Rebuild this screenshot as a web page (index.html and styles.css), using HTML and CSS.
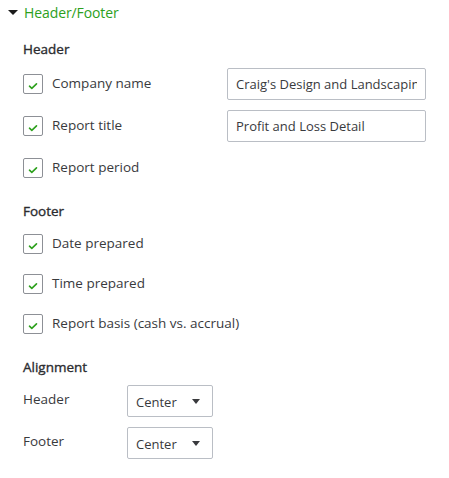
FILE: index.html
```html
<!DOCTYPE html>
<html lang="en">
<head>
    <meta charset="UTF-8">
    <title>Header/Footer</title>
    <link rel="stylesheet" href="styles.css">
</head>
<body>
    <div class="section-toggle">
        <span class="caret"></span>
        <span class="section-title">Header/Footer</span>
    </div>

    <div class="panel">
        <h3 class="group-title">Header</h3>
        <div class="rows rows-header">
            <label class="row">
                <span class="check"><svg viewBox="0 0 10 8" width="10" height="8"><polyline points="1.5,4.2 3.8,6.3 8.5,1.8" /></svg></span>
                <span class="label">Company name</span>
                <input class="text-input" type="text" value="Craig's Design and Landscaping Services">
            </label>
            <label class="row">
                <span class="check"><svg viewBox="0 0 10 8" width="10" height="8"><polyline points="1.5,4.2 3.8,6.3 8.5,1.8" /></svg></span>
                <span class="label">Report title</span>
                <input class="text-input" type="text" value="Profit and Loss Detail">
            </label>
            <label class="row">
                <span class="check"><svg viewBox="0 0 10 8" width="10" height="8"><polyline points="1.5,4.2 3.8,6.3 8.5,1.8" /></svg></span>
                <span class="label">Report period</span>
            </label>
        </div>

        <h3 class="group-title">Footer</h3>
        <div class="rows rows-footer">
            <label class="row">
                <span class="check"><svg viewBox="0 0 10 8" width="10" height="8"><polyline points="1.5,4.2 3.8,6.3 8.5,1.8" /></svg></span>
                <span class="label">Date prepared</span>
            </label>
            <label class="row">
                <span class="check"><svg viewBox="0 0 10 8" width="10" height="8"><polyline points="1.5,4.2 3.8,6.3 8.5,1.8" /></svg></span>
                <span class="label">Time prepared</span>
            </label>
            <label class="row">
                <span class="check"><svg viewBox="0 0 10 8" width="10" height="8"><polyline points="1.5,4.2 3.8,6.3 8.5,1.8" /></svg></span>
                <span class="label">Report basis (cash vs. accrual)</span>
            </label>
        </div>

        <h3 class="group-title">Alignment</h3>
        <div class="rows rows-align">
            <div class="align-row">
                <span class="align-label">Header</span>
                <div class="select">Center <span class="select-caret"></span></div>
            </div>
            <div class="align-row">
                <span class="align-label">Footer</span>
                <div class="select">Center <span class="select-caret"></span></div>
            </div>
        </div>
    </div>
</body>
</html>
```

FILE: styles.css
```css
body {
    margin: 0;
    font-family: 'Open Sans', 'Lato', sans-serif;
    font-size: 13.5px;
    color: #393a3d;
    background: #fff;
}

.section-toggle {
    display: flex;
    align-items: center;
    height: 25px;
    padding-left: 8px;
}

.caret {
    width: 0;
    height: 0;
    border-left: 5px solid transparent;
    border-right: 5px solid transparent;
    border-top: 5px solid #1b1b1b;
    margin-right: 6px;
}

.section-title {
    color: #2ca01c;
    font-size: 14px;
    letter-spacing: -0.1px;
}

.panel {
    padding-left: 23px;
}

.group-title {
    margin: 0;
    font-size: 13.5px;
    font-weight: 400;
    line-height: 20px;
    color: #2b2c2f;
    -webkit-text-stroke: 0.35px #2b2c2f;
}

.panel > .group-title:first-child {
    margin-top: 14px;
}

.rows {
    display: flex;
    flex-direction: column;
}

.rows-header {
    margin-top: 9px;
    gap: 10px;
    margin-bottom: 17px;
}

.rows-footer {
    margin-top: 7px;
    gap: 8px;
    margin-bottom: 17px;
}

.rows-align {
    margin-top: 8px;
    gap: 10px;
}

.row {
    display: flex;
    align-items: center;
    height: 32px;
}

.check {
    box-sizing: border-box;
    flex: none;
    width: 20px;
    height: 20px;
    border: 1px solid #8d9096;
    border-radius: 2px;
    display: flex;
    align-items: center;
    justify-content: center;
    padding-top: 3px;
    margin-right: 9px;
}

.check polyline {
    fill: none;
    stroke: #2ca01c;
    stroke-width: 1.6;
    stroke-linecap: round;
    stroke-linejoin: round;
}

.label {
    width: 175px;
    white-space: nowrap;
    margin-top: -3px;
}

.text-input {
    box-sizing: border-box;
    width: 199px;
    height: 32px;
    border: 1px solid #babec5;
    border-radius: 2px;
    padding: 0 8px;
    font-family: inherit;
    font-size: 13px;
    color: #393a3d;
    outline: none;
}

.align-row {
    display: flex;
    align-items: center;
    height: 32px;
}

.align-label {
    width: 104px;
    margin-top: -4px;
}

.select {
    box-sizing: border-box;
    width: 86px;
    height: 32px;
    border: 1px solid #babec5;
    border-radius: 2px;
    padding: 2px 12px 0 8px;
    font-size: 13px;
    display: flex;
    align-items: center;
    justify-content: space-between;
}

.select-caret {
    width: 0;
    height: 0;
    border-left: 4px solid transparent;
    border-right: 4px solid transparent;
    border-top: 5px solid #393a3d;
    margin-top: -2px;
}
```
